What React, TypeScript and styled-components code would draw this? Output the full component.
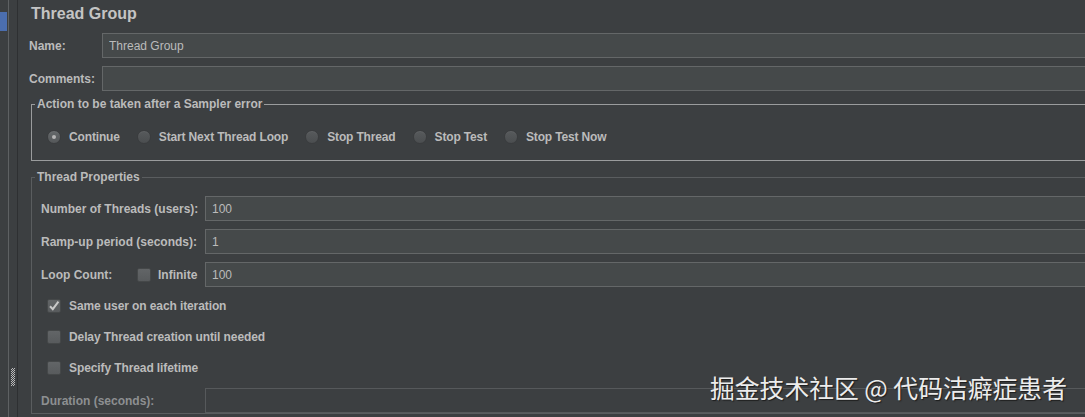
import React from "react";
import styled, { createGlobalStyle } from "styled-components";

const Global = createGlobalStyle`
  html, body {
    margin: 0;
    padding: 0;
    background: #3c3f41;
  }
  * { box-sizing: border-box; }
`;

const UI_FONT = `"Liberation Sans", Arial, sans-serif`;

const Frame = styled.div`
  position: relative;
  display: flex;
  width: 1085px;
  height: 417px;
  overflow: hidden;
  background: #3c3f41;
  font-family: ${UI_FONT};
  color: #bbbbbb;
`;

/* sliver of the test plan tree with the selected node */
const TreeEdge = styled.div`
  width: 8px;
  flex: none;
  padding-top: 12px;
`;

const TreeSelection = styled.div`
  width: 7px;
  height: 19px;
  background: #4b6eaf;
`;

/* split pane divider with its drag grip */
const Splitter = styled.div`
  width: 10px;
  flex: none;
  display: flex;
  flex-direction: column;
  justify-content: flex-end;
  align-items: center;
  padding-bottom: 31px;
  border-left: 1px solid #5e6163;
  border-right: 1px solid #2e3032;
`;

const SplitterGrip = styled.div`
  width: 4px;
  height: 18px;
  background: repeating-conic-gradient(#cfcfcf 0 25%, transparent 0 50%) 0 0 / 2px 2px;
  opacity: 0.85;
`;

const Editor = styled.div`
  flex: 1;
  margin-right: -30px;
  padding-left: 11px;
  display: flex;
  flex-direction: column;
`;

const Title = styled.div`
  height: 25px;
  line-height: 25px;
  padding: 1px 0 0 2px;
  font-size: 16px;
  font-weight: bold;
  color: #c4c4c4;
`;

const FieldStack = styled.div<{ $gap?: number; $top?: number }>`
  display: flex;
  flex-direction: column;
  gap: ${(p) => p.$gap ?? 8}px;
  margin-top: ${(p) => p.$top ?? 0}px;
`;

const FieldRow = styled.div`
  display: flex;
  align-items: center;
  height: 25px;
`;

const FieldLabel = styled.div<{ $width: number; $dim?: boolean }>`
  width: ${(p) => p.$width}px;
  flex: none;
  display: flex;
  align-items: center;
  font-size: 12px;
  font-weight: bold;
  color: ${(p) => (p.$dim ? "#8d8f91" : "#bbbbbb")};
  white-space: nowrap;
`;

const TextField = styled.input<{ $disabled?: boolean }>`
  flex: 1;
  min-width: 0;
  height: 25px;
  margin: 0;
  padding: 0 6px;
  border: 1px solid ${(p) => (p.$disabled ? "#56595b" : "#646768")};
  background: ${(p) => (p.$disabled ? "#3c3f41" : "#45494a")};
  color: #bbbbbb;
  font-family: ${UI_FONT};
  font-size: 12px;
  outline: none;
`;

const Group = styled.fieldset<{ $line: string; $top: number }>`
  margin: ${(p) => p.$top}px 0 0 2px;
  padding: 0;
  min-width: 0;
  border: 1px solid ${(p) => p.$line};
`;

const GroupTitle = styled.legend<{ $offset: number }>`
  margin-left: ${(p) => p.$offset}px;
  padding: 0 2px;
  font-size: 12px;
  font-weight: bold;
  line-height: 14px;
  color: #bbbbbb;
`;

const RadioRow = styled.div`
  display: flex;
  align-items: center;
  height: 16px;
  padding: 18px 0 15px 15px;
  box-sizing: content-box;
  gap: 17px;
`;

const RadioOption = styled.label`
  display: flex;
  align-items: center;
  gap: 8px;
  font-size: 12px;
  font-weight: bold;
  letter-spacing: -0.15px;
  color: #bbbbbb;
  white-space: nowrap;
`;

const RadioDot = styled.span<{ $checked?: boolean }>`
  width: 14px;
  height: 14px;
  flex: none;
  border-radius: 50%;
  display: flex;
  align-items: center;
  justify-content: center;
  border: 1px solid #3a3c3e;
  background: ${(p) =>
    p.$checked
      ? "linear-gradient(180deg, #64686a, #55585a)"
      : "linear-gradient(180deg, #575a5c, #4b4e50)"};
  box-shadow: inset 0 1px 0 rgba(255, 255, 255, 0.06);

  &::after {
    content: "";
    width: 4px;
    height: 4px;
    border-radius: 50%;
    background: ${(p) => (p.$checked ? "#b5b5b5" : "transparent")};
  }
`;

const PropsBody = styled.div`
  padding: 12px 0 0 9px;
`;

const LoopLabel = styled.div`
  width: 96px;
`;

const InlineCheck = styled.label`
  display: flex;
  align-items: center;
  gap: 7px;
`;

const CheckList = styled.div`
  display: flex;
  flex-direction: column;
  margin-top: 3px;
  padding-left: 6px;
`;

const CheckRow = styled.label`
  display: flex;
  align-items: center;
  gap: 8px;
  height: 31px;
  font-size: 12px;
  font-weight: bold;
  letter-spacing: -0.1px;
  color: #bbbbbb;
`;

const CheckBox = styled.span`
  width: 14px;
  height: 14px;
  flex: none;
  border-radius: 2px;
  border: 1px solid #454849;
  background: linear-gradient(180deg, #626567, #585b5d);
  display: flex;
  align-items: center;
  justify-content: center;
`;

const DurationRow = styled(FieldRow)`
  margin-top: 5px;
`;

const Watermark = styled.div`
  position: absolute;
  left: 710px;
  top: 375px;
  font-family: "Noto Sans CJK SC", sans-serif;
  font-size: 24.8px;
  line-height: 24px;
  color: #ececec;
  text-shadow: 1px 1px 1px #1c1c1c;
  white-space: nowrap;
`;

const Check = ({ checked }: { checked?: boolean }) => (
  <CheckBox>
    {checked && (
      <svg width="12" height="12" viewBox="0 0 12 12">
        <path d="M2 6.2 L4.8 9.2 L10.4 1.6" fill="none" stroke="#c9c9c9" strokeWidth="2" />
      </svg>
    )}
  </CheckBox>
);

const actions = [
  "Continue",
  "Start Next Thread Loop",
  "Stop Thread",
  "Stop Test",
  "Stop Test Now",
];

export default function App() {
  return (
    <Frame>
      <Global />
      <TreeEdge>
        <TreeSelection />
      </TreeEdge>
      <Splitter>
        <SplitterGrip />
      </Splitter>
      <Editor>
        <Title>Thread Group</Title>
        <FieldStack $top={8}>
          <FieldRow>
            <FieldLabel $width={73}>Name:</FieldLabel>
            <TextField readOnly defaultValue="Thread Group" />
          </FieldRow>
          <FieldRow>
            <FieldLabel $width={73}>Comments:</FieldLabel>
            <TextField readOnly defaultValue="" />
          </FieldRow>
        </FieldStack>

        <Group $line="#9a9c9d" $top={6}>
          <GroupTitle $offset={3}>Action to be taken after a Sampler error</GroupTitle>
          <RadioRow>
            {actions.map((a, i) => (
              <RadioOption key={a}>
                <RadioDot $checked={i === 0} />
                {a}
              </RadioOption>
            ))}
          </RadioRow>
        </Group>

        <Group $line="#5a5d5f" $top={9}>
          <GroupTitle $offset={3}>Thread Properties</GroupTitle>
          <PropsBody>
            <FieldStack>
              <FieldRow>
                <FieldLabel $width={164}>Number of Threads (users):</FieldLabel>
                <TextField readOnly defaultValue="100" />
              </FieldRow>
              <FieldRow>
                <FieldLabel $width={164}>Ramp-up period (seconds):</FieldLabel>
                <TextField readOnly defaultValue="1" />
              </FieldRow>
              <FieldRow>
                <FieldLabel $width={164}>
                  <LoopLabel>Loop Count:</LoopLabel>
                  <InlineCheck>
                    <Check />
                    Infinite
                  </InlineCheck>
                </FieldLabel>
                <TextField readOnly defaultValue="100" />
              </FieldRow>
            </FieldStack>
            <CheckList>
              <CheckRow>
                <Check checked />
                Same user on each iteration
              </CheckRow>
              <CheckRow>
                <Check />
                Delay Thread creation until needed
              </CheckRow>
              <CheckRow>
                <Check />
                Specify Thread lifetime
              </CheckRow>
            </CheckList>
            <DurationRow>
              <FieldLabel $width={164} $dim>
                Duration (seconds):
              </FieldLabel>
              <TextField readOnly $disabled defaultValue="" />
            </DurationRow>
          </PropsBody>
        </Group>
      </Editor>
      <Watermark>掘金技术社区 @ 代码洁癖症患者</Watermark>
    </Frame>
  );
}
